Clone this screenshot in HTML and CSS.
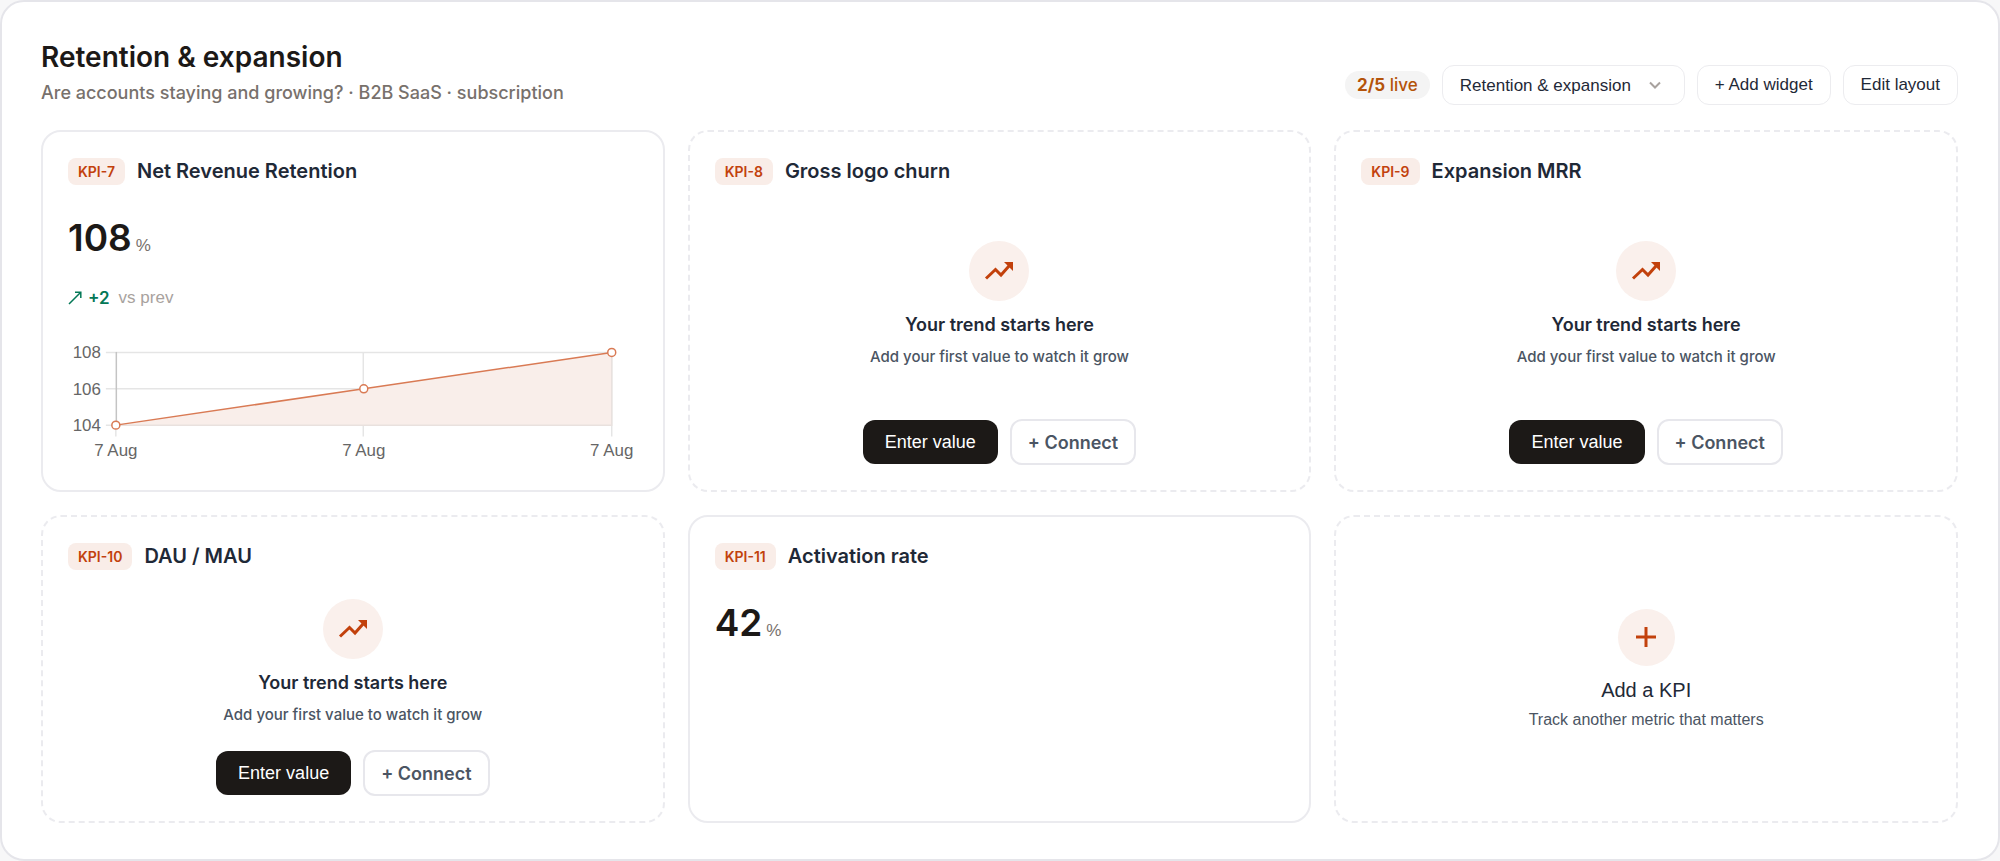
FILE: index.html
```html
<!DOCTYPE html>
<html lang="en">
<head>
<meta charset="utf-8">
<meta name="viewport" content="width=device-width, initial-scale=1">
<title>Retention &amp; expansion</title>
<link rel="stylesheet" href="styles.css">
</head>
<body>
<svg class="sprite" aria-hidden="true">
  <symbol id="trend" viewBox="0 0 30 20">
    <path d="M2 17.500 11.500 8.500 17 14 25 5" fill="none" stroke="currentColor" stroke-width="3"/>
    <path d="M20 1H29V10Z" fill="currentColor"/>
  </symbol>
</svg>
<main class="board">
  <header class="board-head">
    <div class="heading">
      <h1 class="title">Retention &amp; expansion</h1>
      <p class="subtitle">Are accounts staying and growing? · B2B SaaS · subscription</p>
    </div>
    <div class="toolbar">
      <span class="live"><strong>2/5</strong> live</span>
      <span class="picker">
        <select class="control picker-select" aria-label="Dashboard"><option>Retention &amp; expansion</option></select>
        <svg class="chevron" viewBox="0 0 12 8" aria-hidden="true"><path d="M1 1.500 6 6.500 11 1.500" fill="none" stroke="currentColor" stroke-width="2"/></svg>
      </span>
      <button class="control" type="button">+ Add widget</button>
      <button class="control" type="button">Edit layout</button>
    </div>
  </header>
  <div class="grid">
    <section class="card">
      <div class="card-head"><span class="tag">KPI-7</span><h2 class="card-title">Net Revenue Retention</h2></div>
      <p class="value">108<span class="unit">%</span></p>
      <p class="delta"><svg class="up" viewBox="0 0 14 14" aria-hidden="true"><path d="M1 13 12.500 1.500M7 1.200H12.800V7" fill="none" stroke="currentColor" stroke-width="1.500"/></svg><strong class="gain">+2</strong><span class="prev">vs prev</span></p>
      <svg class="chart" viewBox="0 0 572 126" role="img" aria-label="Net Revenue Retention trend">
        <path d="M38 14.500H546M38 51H546M38 87.500H546M296.500 14V99M546 14V99M48 88V99" stroke="#e5e5e5" stroke-width="1.500" fill="none"/>
        <path d="M48.500 14V88" stroke="#c4c4c4" stroke-width="1.500"/>
        <path d="M48 87.500 297 51 546 14.500V87.500Z" fill="#f9eeea"/>
        <path d="M48 87.500H546V14.500" fill="none" stroke="#e9e1de" stroke-width="1.500"/>
        <path d="M48 87.500 297 51 546 14.500" fill="none" stroke="#d97a54" stroke-width="1.500"/>
        <g class="dots"><circle cx="48" cy="87.500" r="4"/><circle cx="297" cy="51" r="4"/><circle cx="546" cy="14.500" r="4"/></g>
        <g class="axis axis-y"><text x="33" y="20">108</text><text x="33" y="57">106</text><text x="33" y="93">104</text></g>
        <g class="axis axis-x"><text x="48" y="118">7 Aug</text><text x="297" y="118">7 Aug</text><text x="546" y="118">7 Aug</text></g>
      </svg>
    </section>
    <section class="card empty">
      <div class="card-head"><span class="tag">KPI-8</span><h2 class="card-title">Gross logo churn</h2></div>
      <div class="intro"><span class="badge"><svg class="trend" aria-hidden="true"><use href="#trend"/></svg></span><h3 class="intro-title">Your trend starts here</h3><p class="intro-text">Add your first value to watch it grow</p></div>
      <div class="actions"><button class="primary" type="button">Enter value</button><button class="secondary" type="button">+ Connect</button></div>
    </section>
    <section class="card empty">
      <div class="card-head"><span class="tag">KPI-9</span><h2 class="card-title">Expansion MRR</h2></div>
      <div class="intro"><span class="badge"><svg class="trend" aria-hidden="true"><use href="#trend"/></svg></span><h3 class="intro-title">Your trend starts here</h3><p class="intro-text">Add your first value to watch it grow</p></div>
      <div class="actions"><button class="primary" type="button">Enter value</button><button class="secondary" type="button">+ Connect</button></div>
    </section>
    <section class="card empty">
      <div class="card-head"><span class="tag">KPI-10</span><h2 class="card-title">DAU / MAU</h2></div>
      <div class="intro"><span class="badge"><svg class="trend" aria-hidden="true"><use href="#trend"/></svg></span><h3 class="intro-title">Your trend starts here</h3><p class="intro-text">Add your first value to watch it grow</p></div>
      <div class="actions"><button class="primary" type="button">Enter value</button><button class="secondary" type="button">+ Connect</button></div>
    </section>
    <section class="card">
      <div class="card-head"><span class="tag">KPI-11</span><h2 class="card-title">Activation rate</h2></div>
      <p class="value">42<span class="unit">%</span></p>
    </section>
    <button class="card empty add" type="button">
      <span class="badge badge-add"><svg class="plus" viewBox="0 0 20 20" aria-hidden="true"><path d="M10 0V20M0 10H20" stroke="currentColor" stroke-width="3"/></svg></span>
      <span class="add-title">Add a KPI</span>
      <span class="add-text">Track another metric that matters</span>
    </button>
  </div>
</main>
</body>
</html>
```
FILE: styles.css
```css
* { box-sizing: border-box; }
body { margin: 0; background: #f7f7f8; color: #1c1917; font-family: Inter, "Liberation Sans", sans-serif; }
h1, h2, h3, p { margin: 0; }
button, select { font: inherit; cursor: pointer; }
.sprite { display: none; }
.board { min-height: 100vh; padding: 36px 40px 35px 39px; background: #fff; border: 2px solid #e5e5ea; border-radius: 24px; }
.board-head { display: flex; justify-content: space-between; align-items: flex-end; margin-bottom: 25px; }
.title { font-size: 28px; line-height: 38px; font-weight: 600; }
.subtitle { margin-top: 5px; font-size: 18px; line-height: 24px; font-weight: 500; color: #78716c; }
.toolbar { display: flex; align-items: center; gap: 12px; }
.live { padding: 0 12px; border-radius: 14px; background: #f4f4f4; color: #b45309; font-size: 17px; line-height: 28px; font-weight: 500; }
.live strong { font-weight: 700; }
.control { height: 40px; padding: 0 17px; border: 1px solid #ececef; border-radius: 12px; background: #fff; color: #1f2937; font-family: "Liberation Sans", Arial, sans-serif; font-size: 17px; }
.picker { position: relative; display: flex; }
.picker-select { appearance: none; padding-right: 52px; }
.chevron { position: absolute; right: 24px; top: 16px; width: 12px; height: 8px; color: #a8a29e; pointer-events: none; }
.grid { display: grid; grid-template-columns: repeat(3, minmax(0, 1fr)); grid-template-rows: minmax(362px, auto) minmax(308px, auto); gap: 23px; }
.card { display: flex; flex-direction: column; padding: 26px 25px 25px; border: 2px solid #ebebef; border-radius: 20px; background: #fff; }
.empty { border-style: dashed; }
.card-head { display: flex; align-items: center; gap: 12px; }
.tag { padding: 0 10px; border-radius: 8px; background: #f9ede8; color: #c2410c; font-size: 14px; line-height: 27px; font-weight: 600; }
.card-title { color: #1f2937; font-size: 20px; line-height: 27px; font-weight: 600; }
.value { display: flex; align-items: baseline; gap: 4px; margin-top: 29px; font-size: 37px; line-height: 48px; font-weight: 600; }
.unit { color: #78716c; font-family: "Liberation Sans", Arial, sans-serif; font-size: 17px; font-weight: 400; }
.delta { display: flex; align-items: center; margin-top: 16px; font-size: 17px; line-height: 24px; }
.up { width: 14px; height: 14px; margin-right: 6px; color: #047857; }
.gain { margin-right: 9px; color: #047857; font-weight: 600; }
.prev { color: #a8a29e; font-family: "Liberation Sans", Arial, sans-serif; }
.chart { width: 100%; margin-top: 28px; overflow: visible; }
.dots { fill: #fff; stroke: #d97a54; stroke-width: 1.5px; }
.axis { fill: #666; font-family: "Liberation Sans", Arial, sans-serif; font-size: 17px; }
.axis-y { text-anchor: end; }
.axis-x { text-anchor: middle; }
.intro { flex: 1; display: flex; flex-direction: column; align-items: center; justify-content: center; padding-top: 4px; }
.badge { display: grid; place-items: center; width: 60px; height: 60px; border-radius: 50%; background: #faf0ec; color: #c2410c; }
.trend { width: 30px; height: 20px; }
.intro-title { margin-top: 11px; color: #1f2937; font-size: 18px; line-height: 26px; font-weight: 600; }
.intro-text { margin-top: 8px; color: #4b5563; font-size: 15px; line-height: 22px; font-weight: 500; }
.actions { display: flex; justify-content: center; align-items: center; gap: 12px; }
.primary { height: 44px; padding: 0 22px; border: 0; border-radius: 12px; background: #1c1917; color: #fff; font-family: "Liberation Sans", Arial, sans-serif; font-size: 18px; }
.secondary { height: 46px; padding: 0 16px; border: 2px solid #e7e7ec; border-radius: 12px; background: #fff; color: #4b5563; font-size: 18px; font-weight: 600; }
.add { align-items: center; justify-content: center; font-family: "Liberation Sans", Arial, sans-serif; }
.badge-add { width: 57px; height: 57px; }
.plus { width: 20px; height: 20px; }
.add-title { margin-top: 11px; color: #1f2937; font-size: 20px; line-height: 26px; }
.add-text { margin-top: 6px; color: #4b5563; font-size: 16px; line-height: 22px; }
```
